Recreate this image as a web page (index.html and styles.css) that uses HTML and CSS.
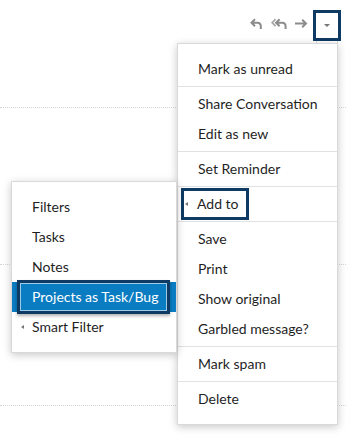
FILE: index.html
```html
<!DOCTYPE html>
<html lang="en">
<head>
    <meta charset="UTF-8">
    <title>Mail actions</title>
    <link rel="stylesheet" href="styles.css">
</head>
<body>

<div class="screen">
    <div class="toolbar">
        <span class="tool reply" title="Reply">
            <svg width="12" height="11" viewBox="0 0 12 11"><path d="M5 1.2 L1.5 4.7 L5 8.2 M1.8 4.7 H7.3 Q10.8 4.7 10.8 8.2 V11" fill="none" stroke="#8c8c8c" stroke-width="2"/></svg>
        </span>
        <span class="tool reply-all" title="Reply all">
            <svg width="16" height="11" viewBox="0 0 16 11"><path d="M4.6 1.2 L1.2 4.7 L4.6 8.2" fill="none" stroke="#a8a8a8" stroke-width="1.7"/><path d="M8.6 1.2 L5.1 4.7 L8.6 8.2 M5.4 4.7 H11.1 Q14.6 4.7 14.6 8.2 V11" fill="none" stroke="#8c8c8c" stroke-width="2"/></svg>
        </span>
        <span class="tool forward" title="Forward">
            <svg width="13" height="9" viewBox="0 0 13 9"><path d="M0 4.5 H11 M7.2 0.7 L11 4.5 L7.2 8.3" fill="none" stroke="#8c8c8c" stroke-width="2"/></svg>
        </span>
        <span class="more-btn">
            <span class="caret-down"></span>
        </span>
    </div>

    <div class="mail-list">
        <div class="mail-row first"></div>
        <div class="mail-row second"></div>
        <div class="mail-row third"></div>
    </div>

    <div class="menu main-menu">
        <ul class="group">
            <li>Mark as unread</li>
        </ul>
        <ul class="group">
            <li>Share Conversation</li>
            <li>Edit as new</li>
        </ul>
        <ul class="group">
            <li>Set Reminder</li>
        </ul>
        <ul class="group">
            <li class="has-sub focused"><span class="ring">Add to</span></li>
        </ul>
        <ul class="group">
            <li>Save</li>
            <li>Print</li>
            <li>Show original</li>
            <li>Garbled message?</li>
        </ul>
        <ul class="group">
            <li>Mark spam</li>
        </ul>
        <ul class="group">
            <li>Delete</li>
        </ul>
    </div>

    <div class="menu sub-menu">
        <ul class="group">
            <li>Filters</li>
            <li>Tasks</li>
            <li>Notes</li>
            <li class="active"><span class="ring">Projects as Task/Bug</span></li>
            <li class="has-sub">Smart Filter</li>
        </ul>
    </div>
</div>

</body>
</html>
```

FILE: styles.css
```css
body {
    margin: 0;
    font-family: 'Lato', 'Open Sans', sans-serif;
    background: #fff;
    color: #1f1f1f;
}

.screen {
    position: relative;
    width: 346px;
    height: 439px;
    overflow: hidden;
}

.toolbar {
    display: flex;
    justify-content: flex-end;
    align-items: center;
    height: 44px;
    padding: 7px 5px 0 0;
    box-sizing: border-box;
}

.tool {
    display: flex;
    align-items: center;
    margin-bottom: 5px;
}

.reply {
    margin-right: 9px;
}

.reply-all {
    margin-right: 8px;
}

.forward {
    margin-right: 5px;
}

.more-btn {
    position: relative;
    display: flex;
    align-items: center;
    justify-content: center;
    width: 22px;
    height: 25px;
    border: 3px solid #0f3a63;
    background: #fff;
}

/* light tab edges joining the button to the open menu */
.more-btn::after {
    content: "";
    position: absolute;
    left: 0;
    right: 0;
    top: 100%;
    height: 3px;
    margin-top: 3px;
    border-left: 1px solid #d9d9d9;
    border-right: 1px solid #d9d9d9;
}

.caret-down {
    width: 0;
    height: 0;
    border-left: 3px solid transparent;
    border-right: 3px solid transparent;
    border-top: 3px solid #777;
}

.mail-row {
    border-bottom: 1px dotted #d4d4d4;
}

.mail-row.first {
    height: 63px;
}

.mail-row.second {
    height: 156px;
}

.mail-row.third {
    height: 140px;
}

/* dropdown menus */
.menu {
    position: absolute;
    background: #fff;
    border: 1px solid #d9d9d9;
    box-shadow: 0 2px 8px rgba(0, 0, 0, 0.22);
    padding: 8px 0;
}

.main-menu {
    left: 177px;
    top: 43px;
    width: 159px;
}

.sub-menu {
    left: 11px;
    top: 181px;
    width: 164px;
}

.group {
    list-style: none;
    margin: 0;
    padding: 2px 0;
}

.group + .group {
    border-top: 1px solid #e2e2e2;
}

.group li {
    position: relative;
    height: 30px;
    line-height: 30px;
    padding: 0 20px;
    font-size: 14px;
    white-space: nowrap;
}

.has-sub::before {
    content: "";
    position: absolute;
    left: 9px;
    top: 13px;
    border-top: 2.5px solid transparent;
    border-bottom: 2.5px solid transparent;
    border-right: 3px solid #777;
}

.focused {
    padding-left: 3px !important;
}

.focused::before {
    left: 7px;
}

.focused .ring {
    display: inline-block;
    height: 26px;
    line-height: 26px;
    margin-top: -1px;
    padding: 0 7px 0 13px;
    border: 3px solid #0f3a63;
}

.active {
    background: #0a7cc1;
    color: #fff;
    padding-left: 5px !important;
}

.active .ring {
    display: inline-block;
    height: 28px;
    line-height: 28px;
    margin-top: -2px;
    padding: 0 9px 0 12px;
    border: 3px solid #0f3a63;
    box-shadow: inset 0 0 0 1px rgba(255, 255, 255, 0.6), 0 2px 3px rgba(0, 0, 0, 0.3);
}
```
